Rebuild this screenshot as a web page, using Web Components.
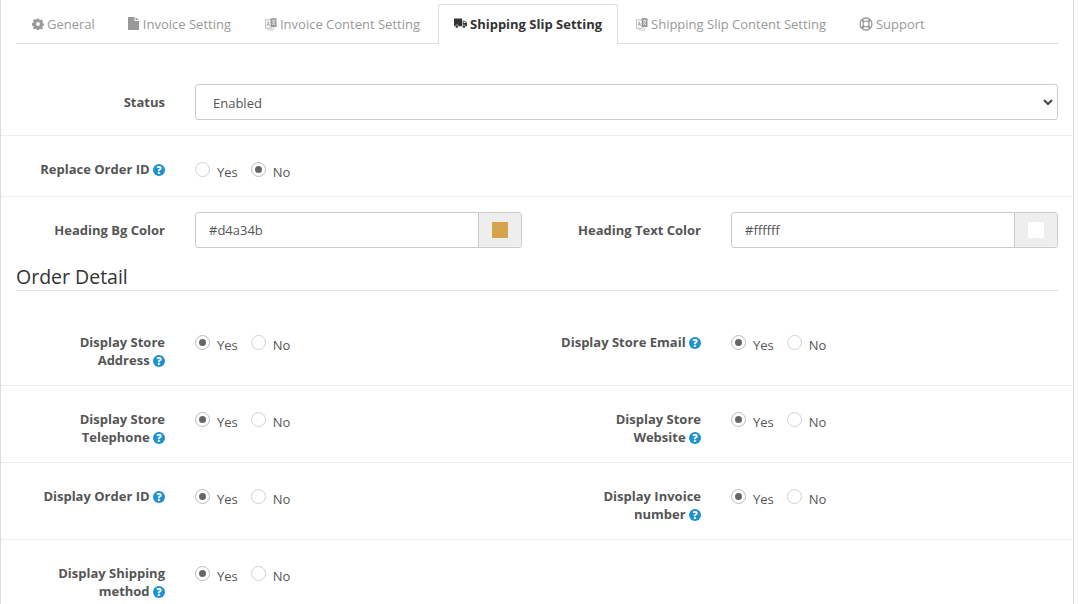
<!DOCTYPE html>
<html><head><meta charset="utf-8"><style>
html,body{margin:0;padding:0;background:#fcfcfc;overflow:hidden;height:604px;width:1078px}
body{font:13px/18px "Open Sans",sans-serif;color:#555}
</style></head><body>
<settings-panel>
<tab-bar>
<tab-item icon="gear" tight>General</tab-item>
<tab-item icon="file">Invoice Setting</tab-item>
<tab-item icon="lang">Invoice Content Setting</tab-item>
<tab-item icon="truck" active>Shipping Slip Setting</tab-item>
<tab-item icon="lang" tight>Shipping Slip Content Setting</tab-item>
<tab-item icon="support">Support</tab-item>
</tab-bar>
<form-row>
<form-field label="Status" wide><select-box>Enabled</select-box></form-field>
</form-row>
<form-row>
<form-field label="Replace Order ID" help><radio-pair value="no"></radio-pair></form-field>
</form-row>
<form-row plain>
<form-field label="Heading Bg Color"><color-input value="#d4a34b" swatch="#d4a34b"></color-input></form-field>
<form-field label="Heading Text Color"><color-input value="#ffffff" swatch="#ffffff"></color-input></form-field>
</form-row>
<section-title>Order Detail</section-title>
<form-row tall>
<form-field label="Display Store Address" help two><radio-pair value="yes"></radio-pair></form-field>
<form-field label="Display Store Email" help><radio-pair value="yes"></radio-pair></form-field>
</form-row>
<form-row tall>
<form-field label="Display Store Telephone" help two><radio-pair value="yes"></radio-pair></form-field>
<form-field label="Display Store Website" help two><radio-pair value="yes"></radio-pair></form-field>
</form-row>
<form-row tall>
<form-field label="Display Order ID" help><radio-pair value="yes"></radio-pair></form-field>
<form-field label="Display Invoice number" help two><radio-pair value="yes"></radio-pair></form-field>
</form-row>
<form-row tall>
<form-field label="Display Shipping method" help two><radio-pair value="yes"></radio-pair></form-field>
<form-field></form-field>
</form-row>
</settings-panel>
<script>
const def=(n,html,init)=>customElements.define(n,class extends HTMLElement{
 constructor(){super();this.attachShadow({mode:'open'}).innerHTML=html;}
 connectedCallback(){init&&init(this,this.shadowRoot);}
});
const icons={
gear:'<svg width="12" height="12" viewBox="0 0 14 14"><path fill="currentColor" fill-rule="evenodd" d="M5.8.5h2.4l.4 1.800 1 .4 1.600-1 1.700 1.700-1 1.600.4 1 1.800.4v2.400l-1.800.4-.4 1 1 1.600-1.700 1.700-1.600-1-1 .4-.4 1.800H5.800l-.4-1.800-1-.4-1.600 1-1.700-1.700 1-1.600-.4-1-1.800-.4V5.800l1.800-.4.4-1-1-1.600 1.700-1.700 1.600 1 1-.4zM7 4.800a2.200 2.200 0 1 0 0 4.400 2.200 2.200 0 0 0 0-4.400z"/></svg>',
file:'<svg width="11" height="13" viewBox="0 0 11 13"><path fill="currentColor" d="M0 0h6.500v4H11v9H0zM7.500.2 10.800 3H7.500z"/></svg>',
lang:'<svg width="12" height="14" viewBox="0 0 13 14"><rect x=".5" y="2.500" width="7" height="9" fill="#fff" stroke="currentColor" stroke-width=".8" opacity=".8"/><rect x="6" y=".8" width="6.500" height="9.500" fill="currentColor"/><path d="M2 9l1.500-4.500L5 9M2.600 7.600h1.800" fill="none" stroke="currentColor" stroke-width=".8"/><path d="M7.500 3.500h3.600M9.300 2.600v1M10.600 3.700c-.4 2-1.500 3.400-2.900 4.200M8 5c.6 1.300 1.600 2.300 2.900 3" fill="none" stroke="#fff" stroke-width=".8"/><path d="M3 11.500l1 2h5l1-2.500" fill="none" stroke="currentColor" stroke-width=".7" opacity=".8"/></svg>',
truck:'<svg width="13" height="11" viewBox="0 0 15 12.500" style="overflow:visible"><path fill="currentColor" d="M0 .5h9.300v8.800H0zM10 3h2.500L15 5.600v3.700H10z"/><circle cx="3.300" cy="9.800" r="1.900" fill="currentColor" stroke="#fff" stroke-width=".7"/><circle cx="11.500" cy="9.800" r="1.900" fill="currentColor" stroke="#fff" stroke-width=".7"/><path fill="#fff" d="M11 4h1.200l1.500 1.600H11z"/></svg>',
support:'<svg width="14" height="14" viewBox="0 0 14 14"><circle cx="7" cy="7" r="6" fill="none" stroke="currentColor" stroke-width="1.300"/><circle cx="7" cy="7" r="3" fill="none" stroke="currentColor" stroke-width="1.200"/><path d="M3 3l2 2M11 3 9 5M3 11l2-2M11 11 9 9" stroke="currentColor" stroke-width="2.200"/></svg>'};
const adv={gear:15,file:15,lang:15,truck:16,support:17};
def('settings-panel','<style>:host{display:block;width:1074px;background:#fff;border-left:1px solid #ddd;border-right:1px solid #ddd;height:604px;box-sizing:border-box;overflow:hidden}</style><slot></slot>');
def('tab-bar','<style>:host{display:flex;margin:0 15px;padding-top:4px;height:39px;border-bottom:1px solid #ddd;box-sizing:content-box}</style><slot></slot>');
def('tab-item','<style>:host{display:flex;align-items:center;padding:0 15px 2px;height:40px;margin-right:2px;box-sizing:border-box;color:#999;border:1px solid transparent;border-bottom:0;white-space:nowrap}:host([tight]){margin-right:1px}:host([active]){color:#333;font-weight:700;background:#fff;border-color:#ddd;border-radius:3px 3px 0 0;}svg{display:block}span{display:flex;flex:none}</style><span id="i"></span><slot></slot>',(h,s)=>{const k=h.getAttribute("icon"),i=s.getElementById('i');i.innerHTML=icons[k];i.style.width=adv[k]+'px'});
def('form-row','<style>:host{display:flex;padding:15px 0;border-bottom:1px solid #ededed;box-sizing:content-box}:host([plain]){border-bottom:0;padding-bottom:0}:host(:first-of-type){padding-top:40px}:host([tall]){min-height:46px}</style><slot></slot>');
def('form-field','<style>:host{display:flex;flex:1 1 0;min-width:0}label{width:164px;padding:9px 0 0 0;margin-right:30px;text-align:right;font-weight:700;color:#555;flex:none;box-sizing:border-box;margin-left:0}:host(:not([label])) label{visibility:hidden}.c{flex:1;min-width:0;padding-right:15px}svg{vertical-align:-1.500px}</style><label id="l"></label><div class="c"><slot></slot></div>',(h,s)=>{
 const l=s.getElementById('l');let t=h.getAttribute('label')||'';
 l.textContent=t;
 if(h.hasAttribute('two')){const i=t.lastIndexOf(' ');const a=t.slice(0,i),b=t.slice(i+1);l.innerHTML='';l.append(a,document.createElement('br'),b)}
 if(h.hasAttribute('help')){l.insertAdjacentHTML('beforeend',' <svg width="12" height="12" viewBox="0 0 12 12"><circle cx="6" cy="6" r="6" fill="#1e91cf"/><text x="6" y="9.700" text-anchor="middle" font-family="Open Sans" font-size="10" font-weight="800" fill="#fff">?</text></svg>')}
});
def('select-box','<style>:host{display:block;height:36px;border:1px solid #ccc;border-radius:3px;box-sizing:border-box;position:relative;padding:0 17px;line-height:37px;color:#555;background:#fff}svg{position:absolute;right:4px;top:12px}</style><slot></slot><svg width="10" height="10" viewBox="0 0 10 10"><path d="M1 3l4 4 4-4" fill="none" stroke="#444" stroke-width="2"/></svg>');
def('color-input','<style>:host{display:flex;height:36px;border:1px solid #ccc;border-radius:3px;box-sizing:border-box;overflow:hidden}#v{flex:1;padding-left:13px;line-height:34px;color:#555}#a{width:42px;border-left:1px solid #ccc;background:#eee;display:flex;align-items:center;justify-content:center;flex:none}#s{width:16px;height:16px}</style><div id="v"></div><div id="a"><div id="s"></div></div>',(h,s)=>{s.getElementById('v').textContent=h.getAttribute('value');s.getElementById('s').style.background=h.getAttribute('swatch')});
def('radio-pair','<style>:host{display:flex;padding-top:9px;height:30px;box-sizing:border-box;line-height:18px}.o{display:flex;margin-right:13px;gap:7px}.r{width:15px;height:15px;border:1px solid #d0d0d0;border-radius:50%;box-sizing:border-box;margin-top:2px;position:relative;background:#fff}.on{border-color:#bbb}.on::after{content:"";position:absolute;left:3px;top:3px;width:7px;height:7px;border-radius:50%;background:#666}span{padding-top:3px}</style><div class="o"><div class="r" id="y"></div><span>Yes</span></div><div class="o"><div class="r" id="n"></div><span>No</span></div>',(h,s)=>{s.getElementById(h.getAttribute('value')=='yes'?'y':'n').classList.add('on')});
def('section-title','<style>:host{display:block;margin:16px 15px 18px;font-size:19.500px;line-height:26px;border-bottom:1px solid #e5e5e5;color:#333;height:26px}</style><slot></slot>');
</script>
</body></html>
